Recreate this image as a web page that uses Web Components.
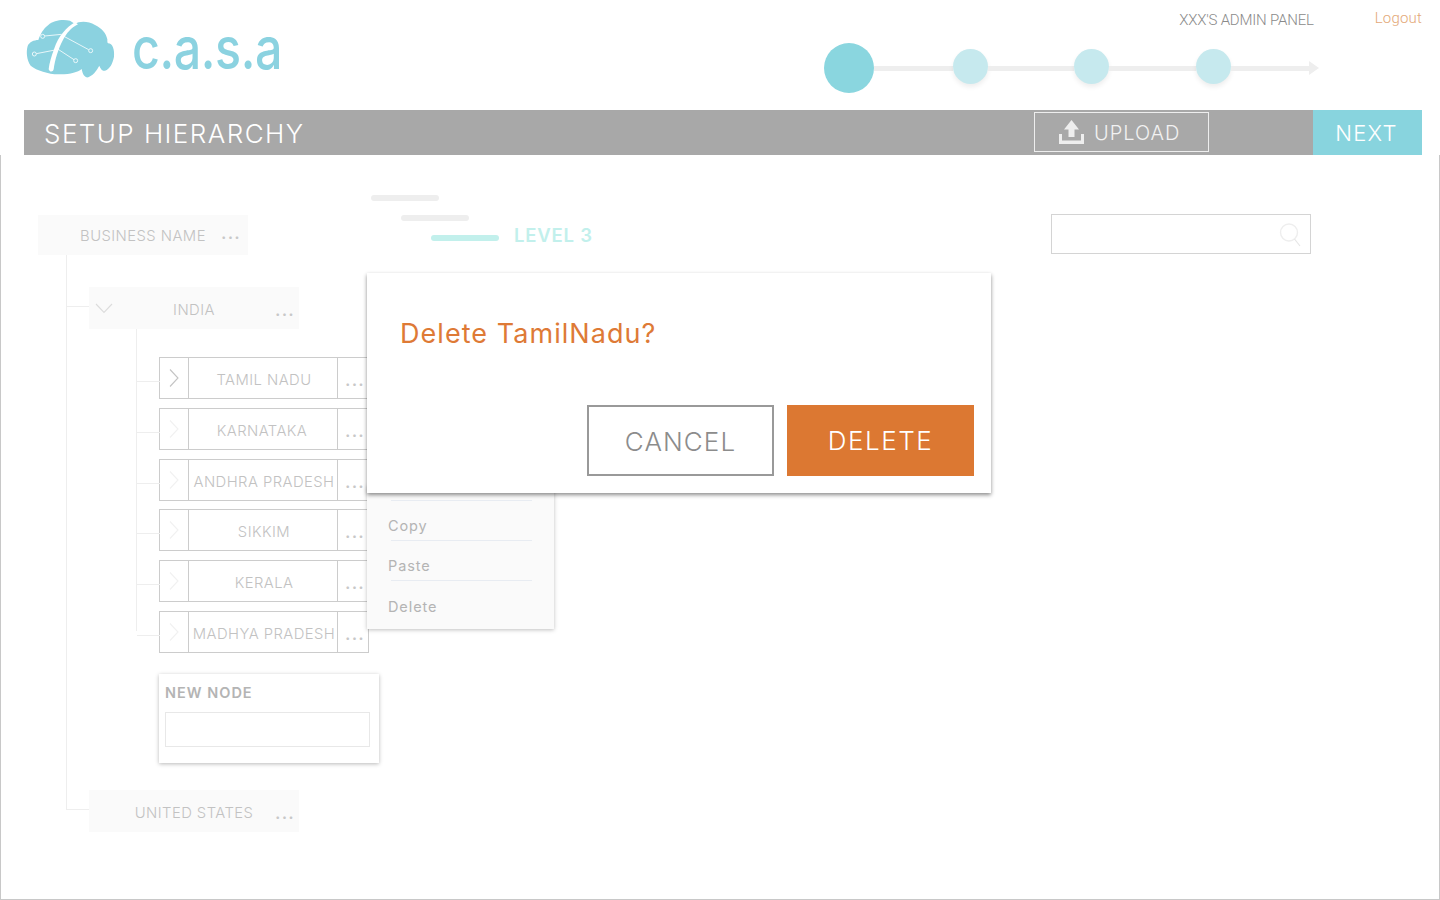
<!DOCTYPE html>
<html lang="en"><head><meta charset="utf-8"><title>Setup hierarchy</title>
<style>
html,body{margin:0;height:900px;overflow:hidden;background:#fff;font-family:Inter,"Liberation Sans",sans-serif}
</style></head><body>
<setup-page>
  <app-header></app-header>
  <title-bar>SETUP HIERARCHY</title-bar>
  <main-panel>
    <hierarchy-tree>
      <tree-node kind="root">BUSINESS NAME</tree-node>
      <tree-branch level="1">
        <tree-node kind="group" open>INDIA</tree-node>
        <tree-branch level="2">
          <tree-node kind="leaf" active>TAMIL NADU</tree-node>
          <tree-node kind="leaf" nudge>KARNATAKA</tree-node>
          <tree-node kind="leaf">ANDHRA PRADESH</tree-node>
          <tree-node kind="leaf">SIKKIM</tree-node>
          <tree-node kind="leaf">KERALA</tree-node>
          <tree-node kind="leaf">MADHYA PRADESH</tree-node>
        </tree-branch>
        <new-node-card></new-node-card>
        <tree-node kind="group" last>UNITED STATES</tree-node>
      </tree-branch>
    </hierarchy-tree>
    <level-legend></level-legend>
    <search-box></search-box>
    <context-menu></context-menu>
    <confirm-dialog></confirm-dialog>
  </main-panel>
</setup-page>
<script>
function def(name, css, html, init){
  customElements.define(name, class extends HTMLElement{
    constructor(){super();const r=this.attachShadow({mode:'open'});
      r.innerHTML='<style>'+css+'</style>'+(typeof html==='function'?html(this):html);}
    connectedCallback(){ if(init) init(this); }
  });
}
def('setup-page',':host{display:flex;flex-direction:column;width:1440px;height:900px}','<slot></slot>');

def('app-logo',`:host{display:flex;align-items:flex-start;gap:12px}
svg{display:block}
.w{font:500 59px/1 Inter,"Liberation Sans",sans-serif;color:#8bd2e0;transform:scaleX(.82);transform-origin:0 0;letter-spacing:-.5px;margin-top:8px;white-space:nowrap;width:150px}`,
`<svg width="100" height="75" viewBox="0 0 300 225">
<path fill="#8bd2e0" d="M85 45C100 30 130 27 150 32L165 42C178 33 205 33 225 45C245 55 258 68 262 88C262 95 262 98 264 100C278 100 284 118 282 140C278 160 270 177 255 182C245 184 240 172 238 167C232 177 225 192 205 202C195 204 188 194 185 177C172 187 150 194 115 193C85 192 50 182 32 167C20 150 18 125 23 108C28 96 42 90 55 90C60 75 70 55 85 45Z"/>
<path fill="#fff" d="M165 37C140 52 116 76 102 118C94 140 88 160 86 178C90 188 99 186 101 178C105 150 114 118 130 88C140 70 152 54 174 43Z"/>
<g stroke="#fff" stroke-width="2.400" fill="none"><path d="M125 73L74 78M130 78L206 119M105 120L49 131M110 115L162 149"/></g>
<g stroke="#fff" stroke-width="2.400" fill="#8bd2e0"><circle cx="68" cy="79" r="6"/><circle cx="212" cy="122" r="6"/><circle cx="43" cy="132" r="6"/><circle cx="167" cy="152" r="6"/></g></svg>
<div class="w">c.a.s.a</div>`);

def('step-track',`:host{display:flex;align-items:center;width:495px;height:50px}
i{display:block;flex:none;border-radius:50%;width:35px;height:35px;background:#c6e9ee;box-shadow:0 3px 5px rgba(0,0,0,.07);margin-top:-3px}
i.on{width:50px;height:50px;background:#8ad6df;box-shadow:none;margin:0}
b{display:block;flex:none;height:5px;background:#eee}
u{display:block;flex:none;width:0;height:0;border-left:10px solid #eee;border-top:7.5px solid transparent;border-bottom:7.5px solid transparent}`,
`<i class="on"></i><b style="width:79px"></b><i></i><b style="width:86px"></b><i></i><b style="width:87px"></b><i></i><b style="width:78px"></b><u></u>`);

def('app-header',`:host{display:flex;justify-content:space-between;height:110px;flex:none}
app-logo{margin:10px 0 0 20px}
.r{width:598px;margin-right:18px;display:flex;flex-direction:column}
.t{display:flex;justify-content:flex-end;height:43px;font-family:Roboto,sans-serif;font-weight:300}
.a{color:#8a8a8a;font-size:15px;line-height:40px;margin-right:61px;letter-spacing:-.2px}
.l{color:#e3a878;font-size:15px;line-height:37px;letter-spacing:.2px}`,
`<app-logo></app-logo><div class="r"><div class="t"><span class="a">XXX'S ADMIN PANEL</span><span class="l">Logout</span></div><step-track></step-track></div>`);

def('title-bar',`:host{display:flex;align-items:center;height:45px;margin:0 18px 0 24px;background:#a8a8a8;flex:none;color:#fff;font-family:Inter,sans-serif}
.t{flex:1;padding:1px 0 0 20px;font-size:26px;font-weight:300;letter-spacing:1.45px;line-height:45px;box-sizing:border-box;height:45px}
.u{display:flex;align-items:center;box-sizing:border-box;width:175px;height:40px;border:1px solid #eee;margin:-1px 104px 0 0;padding:0 0 0 24px;gap:10px;font-size:20px;font-weight:300;letter-spacing:1px;color:#f2f2f2}
.u span{position:relative;top:1px}
.n{display:flex;align-items:center;justify-content:center;width:109px;height:45px;background:#88d4de;font-size:22px;font-weight:300;letter-spacing:1.2px;padding-right:2px;box-sizing:border-box}
svg{display:block}`,
`<span class="t"><slot></slot></span>
<span class="u"><svg width="25" height="24" viewBox="0 0 25 24"><path fill="#eee" d="M12.5 0L20 9.5H15.500V17H9.500V9.500H5Z"/><path fill="#eee" d="M0 14H3V20.500H22V14H25V24H0Z"/></svg><span>UPLOAD</span></span>
<span class="n">NEXT</span>`);

def('main-panel',`:host{display:flex;align-items:flex-start;position:relative;flex:1;box-sizing:border-box;border:1px solid #c8c8c8;border-top:0;padding-left:37px}`,'<slot></slot>');

def('hierarchy-tree',`:host{display:block;width:333px;flex:none;margin-top:60px;font-family:Inter,sans-serif}`,'<slot></slot>');

def('tree-branch',`:host{display:flex;flex-direction:column;position:relative;padding-left:23px}
:host([level="1"]){margin-left:28px;padding-top:32px}
:host([level="2"]){margin-left:47px;padding-top:28px;gap:8.75px}
:host::before{content:"";position:absolute;left:0;top:0;bottom:22px;width:1px;background:#eee}`,'<slot></slot>');

def('tree-node',`:host{display:grid;position:relative;width:210px;box-sizing:border-box;height:42px;background:#fafafa;grid-template-columns:34px 1fr 34px;grid-template-rows:100%;align-items:center;color:#c2c2c2;font-size:14.8px;font-weight:300;text-align:center;flex:none}
:host::before{content:"";position:absolute;left:-23px;top:19px;width:23px;height:1px;background:#eee}
:host([kind="root"]){height:40px}
:host([kind="root"])::before{display:none}
:host([kind="leaf"]){background:#fff;border:1px solid #ccc;grid-template-columns:29px 1fr 31px;}
:host([kind="leaf"])::before{top:23px}
:host([last]){margin-top:27px}
.c{display:flex;height:100%;align-items:center;justify-content:center}
.m{white-space:nowrap;letter-spacing:.45px;padding-top:4px}
:host([kind="root"]) .m{padding-top:1px}
:host([kind="leaf"]) .m{padding-left:2px}
.d{font-size:18px;font-weight:500;letter-spacing:1.2px;align-self:stretch;line-height:46px;color:#c8c8c8;white-space:nowrap;height:100%;box-sizing:border-box;text-align:left;padding-left:10px}
:host([kind="leaf"]) .c{border-right:1px solid #ccc}
:host([kind="leaf"]) .d{border-left:1px solid #ccc;padding-left:7px;line-height:44px}
:host([kind="root"]) .d{line-height:36px;margin-left:-3px}
:host([nudge]) .m{position:relative;left:-2px}
svg{display:block}`,
(h)=>{const k=h.getAttribute('kind');let ic='';
 if(k==='leaf'){ic=`<svg width="10" height="20" viewBox="0 0 10 20"><path d="M1 1.500L9 10L1 18.500" fill="none" stroke="${h.hasAttribute('active')?'#c4c4c4':'#f1f1f1'}" stroke-width="1.100"/></svg>`;}
 else if(h.hasAttribute('open')){ic=`<svg width="18" height="11" viewBox="0 0 18 11" style="margin-left:-4px"><path d="M1 1L9 9.500L17 1" fill="none" stroke="#dcdcdc" stroke-width="1.100"/></svg>`;}
 return `<span class="c">${ic}</span><span class="m"><slot></slot></span><span class="d">...</span>`;});

def('new-node-card',`:host{display:block;box-sizing:border-box;width:220px;height:89px;margin:21px 0 0 70px;background:#fff;box-shadow:0 1px 4px rgba(0,0,0,.28);padding:0 9px 0 6px;font-family:Inter,sans-serif;flex:none}
.t{font-size:14.500px;font-weight:600;color:#b4b4b4;line-height:38px;letter-spacing:1px}
.i{height:35px;box-sizing:border-box;border:1px solid #e8e8e8}`,
`<div class="t">NEW NODE</div><div class="i"></div>`);

def('level-legend',`:host{display:flex;flex-direction:column;margin-top:40px;flex:none;font-family:Inter,sans-serif}
.r{display:flex;align-items:center;height:6px;margin-bottom:14px}
b{display:block;width:68px;height:6px;border-radius:3px;background:#eee;flex:none}
.l2{margin-left:30px}.l3{margin-left:60px}
.l3 b{background:#c2f0ec}
span{margin-left:15px;color:#c2f0ec;font-size:18.500px;font-weight:600;letter-spacing:.8px;white-space:nowrap;position:relative;top:-3px}`,
`<div class="r"><b></b></div><div class="r l2"><b></b></div><div class="r l3"><b></b><span>LEVEL 3</span></div>`);

def('search-box',`:host{display:flex;align-items:center;justify-content:flex-end;box-sizing:border-box;width:260px;height:40px;border:1px solid #d4d4d4;margin:59px 128px 0 auto;padding-right:9px;flex:none}
svg{display:block;margin-top:1px}`,
`<svg width="22" height="24" viewBox="0 0 22 24"><circle cx="10" cy="9.500" r="8.500" fill="none" stroke="#eee" stroke-width="1.400"/><path d="M15.500 16L21 23" stroke="#e6e6e6" stroke-width="1.200"/></svg>`);

def('context-menu',`:host{position:absolute;left:366px;top:330px;width:187px;height:144px;background:#fafafa;box-shadow:0 1px 4px rgba(0,0,0,.25);font-family:Inter,sans-serif;font-size:14.500px;color:#b4b4b4;letter-spacing:.9px;font-weight:400}
.s{height:15px;margin:0 22px 0 24px;border-bottom:1px solid #e8ecf2}
.i{height:40px;margin:0 22px 0 24px;text-indent:-3px;line-height:50px;border-bottom:1px solid #e8ecf2;box-sizing:border-box}
.i:last-child{border:0;line-height:51px}
`,
`<div class="s"></div><div class="i">Copy</div><div class="i">Paste</div><div class="i">Delete</div>`);

def('confirm-dialog',`:host{position:absolute;left:366px;top:118px;width:624px;height:220px;box-sizing:border-box;display:flex;flex-direction:column;background:#fff;box-shadow:0 2px 4px rgba(0,0,0,.45);padding:0 17px 17px 33px;font-family:Inter,sans-serif}
h2{margin:0;font-size:27px;font-weight:400;color:#de7a36;line-height:36px;padding-top:43px;letter-spacing:1.05px;white-space:nowrap}
.a{display:flex;justify-content:flex-end;gap:13px;margin-top:auto}
.b{display:flex;align-items:center;justify-content:center;box-sizing:border-box;width:187px;height:71px;font-size:26px;font-weight:300;letter-spacing:1.100px}
.c{border:2px solid #999;color:#8c8c8c;padding-top:2px}
.d{background:#dc7832;color:#fff;letter-spacing:1.500px}`,
`<h2>Delete TamilNadu?</h2><div class="a"><span class="b c">CANCEL</span><span class="b d">DELETE</span></div>`);
</script>
</body></html>
